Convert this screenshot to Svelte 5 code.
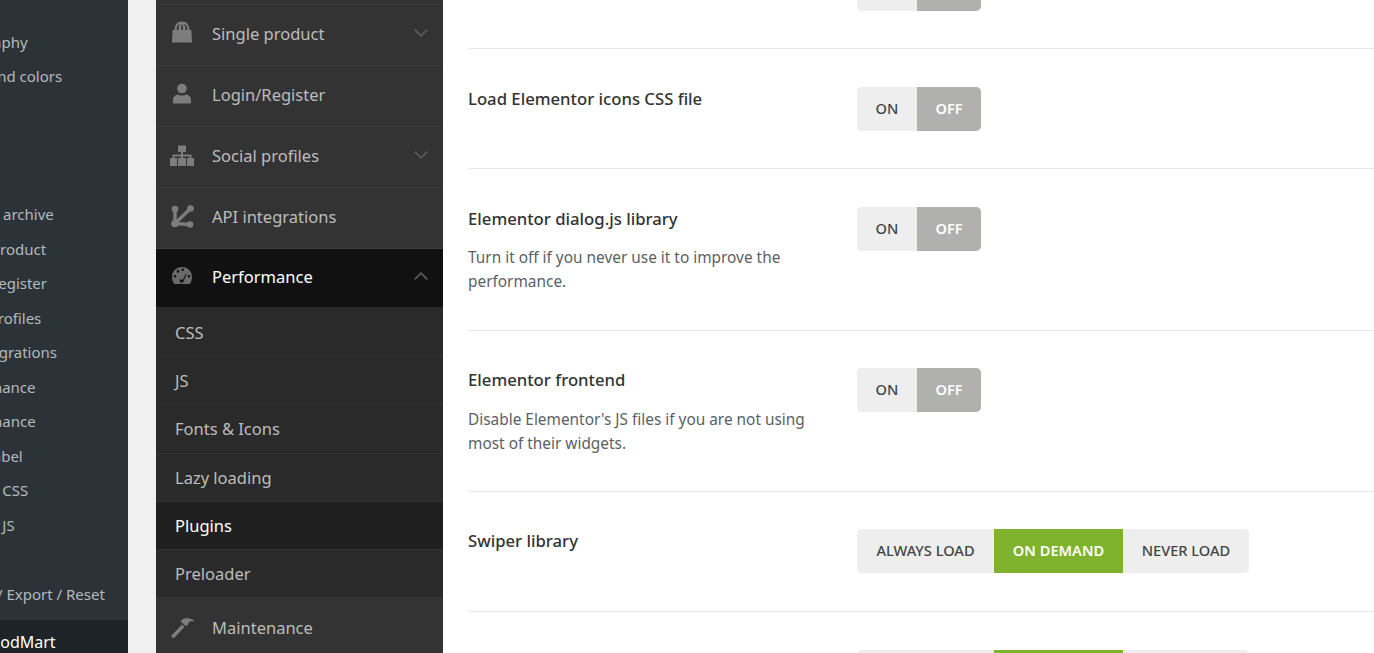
<script>
  const wpItems = [
    'General', 'Typography', 'Styles and colors', '', 'Blog', '',
    'Product archive', 'Single product', 'Login/Register', 'Social profiles',
    'API integrations', 'Performance', 'Maintenance', 'White label',
    'Custom CSS', 'Custom JS', '', 'Import / Export / Reset'
  ];
  const subs = ['CSS', 'JS', 'Fonts & Icons', 'Lazy loading', 'Plugins', 'Preloader'];
  const onOff = [{ t: 'ON' }, { t: 'OFF', off: true }];
  const tri = [{ t: 'ALWAYS LOAD' }, { t: 'ON DEMAND', on: true }, { t: 'NEVER LOAD' }];
  const rows = [
    { label: '', opts: onOff },
    { label: 'Load Elementor icons CSS file', opts: onOff },
    { label: 'Elementor dialog.js library', desc: 'Turn it off if you never use it to improve the performance.', opts: onOff },
    { label: 'Elementor frontend', desc: "Disable Elementor's JS files if you are not using most of their widgets.", opts: onOff },
    { label: 'Swiper library', opts: tri },
    { label: '', opts: tri }
  ];
</script>

{#snippet chev(up)}
  <svg class="chev" viewBox="0 0 14 8" width="14" height="8">
    <path d={up ? 'M.7 7.300 7 1.200l6.300 6.100' : 'M.7.7 7 6.800 13.300.7'} />
  </svg>
{/snippet}

<div class="page">
  <aside class="wp">
    <ul class="wp-list">
      {#each wpItems as item}
        <li>{item}</li>
      {/each}
    </ul>
    <div class="wp-current">WoodMart</div>
  </aside>

  <nav class="panel">
    <div class="top-spacer"></div>
    <div class="item">
      <svg class="ico" viewBox="0 0 24 24" width="24" height="24">
        <path fill-rule="evenodd" d="M2 21.500 2.600 9H4.500C4.600 3.500 7.500.5 12 .5s7.400 3 7.500 8.500h1.900L22 21.500ZM6.800 9h1.700V7.200C8.500 5.200 9.300 3.800 10.400 3.100 8.400 3.500 6.800 5 6.800 7.200ZM11.200 9h1.600V7c0-1.800-.3-3.200-.8-4-.5.800-.8 2.200-.8 4ZM15.500 9h1.700V7.200c0-2.200-1.600-3.700-3.600-4.100 1.100.7 1.900 2.100 1.900 4.100Z" />
      </svg>
      <span>Single product</span>{@render chev(false)}
    </div>
    <div class="item">
      <svg class="ico" viewBox="0 0 24 24" width="24" height="24">
        <circle cx="12" cy="6.500" r="4.800" /><path d="M4 21.500c-.6 0-1-.4-1-1v-2.500c0-3.300 2.300-5.400 5.200-5.600 1 .8 2.400 1.200 3.800 1.200s2.800-.4 3.800-1.200c2.900.2 5.200 2.300 5.200 5.600v2.500c0 .6-.4 1-1 1Z" />
      </svg>
      <span>Login/Register</span>
    </div>
    <div class="item">
      <svg class="ico" viewBox="0 0 24 24" width="24" height="24">
        <path d="M8 2.500h8V9h-3v2.500h8.500V15H24v8h-7v-8h2.500v-1.500H13V15h3v8H8v-8h3v-1.500H4.500V15H7v8H0v-8h2.500v-3.500H11V9H8Z" />
      </svg>
      <span>Social profiles</span>{@render chev(false)}
    </div>
    <div class="item">
      <svg class="ico" viewBox="0 0 24 24" width="24" height="24">
        <circle cx="5" cy="5" r="3.300" /><circle cx="20.500" cy="4.500" r="3.300" /><circle cx="5" cy="19.500" r="3.800" /><circle cx="20" cy="20.500" r="3.300" />
        <path class="line" d="M5 5v14.500L20.500 4.500M5 19.500l15 1" />
      </svg>
      <span>API integrations</span>
    </div>
    <div class="item active">
      <svg class="ico" viewBox="0 0 24 24" width="24" height="24">
        <path fill-rule="evenodd" d="M12 3C5.900 3 2 7.500 2 13c0 2.500.7 4.700 1.800 6.500.3.400.7.500 1.100.5h14.200c.4 0 .8-.1 1.100-.5C21.300 17.700 22 15.500 22 13c0-5.500-3.900-10-10-10ZM5 13.500a1.300 1.300 0 1 0 0-2.600 1.300 1.300 0 0 0 0 2.600ZM8 8.700a1.300 1.300 0 1 0 0-2.600 1.300 1.300 0 0 0 0 2.600ZM12.700 7a1.300 1.300 0 1 0 0-2.600 1.300 1.300 0 0 0 0 2.600ZM19 13.500a1.300 1.300 0 1 0 0-2.600 1.300 1.300 0 0 0 0 2.600ZM10.200 15.500a2 2 0 1 0 3.500 1.600l2.900-7-.9-.4-3 6.600a2 2 0 0 0-2.500-.8Z" />
      </svg>
      <span>Performance</span>{@render chev(true)}
    </div>
    <div class="subs">
      {#each subs as s}
        <div class="sub" class:current={s === 'Plugins'}>{s}</div>
      {/each}
    </div>
    <div class="item last">
      <svg class="ico" viewBox="0 0 24 24" width="24" height="24">
        <path d="M1.500 20.500 12 9.500 14.500 12 4 23C3 23.500 1 22 1.500 20.500ZM10.500 6.500C12.500 3.800 15.500 2.800 18.500 3.200L23.500 5 24 6.500C21.500 5.800 19.500 6.300 18.800 7.500L17.500 10.500 15 10.500 12 7.500Z" />
      </svg>
      <span>Maintenance</span>
    </div>
  </nav>

  <main class="content">
    {#each rows as row, i}
      <section class="row" class:first={i === 0}>
        <div class="text">
          <h3>{row.label}</h3>
          {#if row.desc}<p>{row.desc}</p>{/if}
        </div>
        <div class="opts" class:tri={row.opts === tri}>
          {#each row.opts as o}
            <button class:off={o.off} class:on={o.on}>{o.t}</button>
          {/each}
        </div>
      </section>
    {/each}
  </main>
</div>

<style>
  :global(body) { margin: 0; background: #fff; }
  .page {
    width: 1374px; height: 653px; overflow: hidden; display: flex;
    font-family: "Noto Sans", "Open Sans", sans-serif; background: #f0f0f1;
  }
  .wp {
    width: 128px; flex: none; height: 653px; background: #2c3338; overflow: hidden;
    display: flex; flex-direction: column; white-space: nowrap;
  }
  .wp-list {
    list-style: none; margin: -10px 0 0 -56px; padding: 0; color: #b4b9be; font-size: 15px;
  }
  .wp-list li { height: 34.500px; line-height: 34.500px; }
  .wp-current {
    margin-top: auto; height: 33px; line-height: 44px; background: #1d2327;
    color: #fff; font-size: 16px; text-indent: -24px; overflow: hidden;
  }

  .panel {
    width: 287px; flex: none; margin-left: 28px; background: #333; height: 653px; overflow: hidden;
    color: #bdbdbd; font-size: 16.500px;
  }
  .top-spacer { height: 4px; border-bottom: 1px solid #3c3c3c; }
  .item {
    height: 59.900px; border-bottom: 1px solid #3c3c3c; display: flex; align-items: center;
    padding: 0 15px 0 14px;
  }
  .item span { margin-left: 18px; flex: 1; padding-bottom: 2px; }
  .item.active { background: #111; color: #fff; height: 58.400px; border-bottom: 0; }
  .item.last { border-bottom: 0; padding-top: 1px; }
  .ico { fill: #7d7d7d; flex: none; margin-top: -3px; }
  .ico .line { fill: none; stroke: #7d7d7d; stroke-width: 3.400; }
  .item.active .ico { fill: #6a6a6a; }
  .chev { fill: none; stroke: #5a5a5a; stroke-width: 1.800; flex: none; margin-top: -3px; }
  .subs { background: #2a2a2a; padding-top: 2px; }
  .sub {
    height: 47.200px; line-height: 47.200px; padding-left: 19px; border-bottom: 1px solid #333;
  }
  .sub:last-child { border-bottom: 0; }
  .sub.current { background: #1f1f1f; color: #fff; }

  .content { flex: 1; background: #fff; padding-left: 25px; margin-top: -72px; height: 760px; }
  .row {
    display: flex; align-items: flex-start; padding: 38px 0 37px; border-top: 1px solid #e8e8e8;
  }
  .row.first { border-top: 0; padding-top: 39px; }
  .text { width: 389px; flex: none; }
  h3 { margin: 0; font-size: 16.700px; font-weight: 500; line-height: 24px; color: #333; min-height: 24px; }
  p { margin: 15px 0 -1px; font-size: 15.400px; line-height: 24px; color: #5a5f66; width: 345px; }
  .row:nth-child(4) h3, .row:nth-child(5) h3 { margin-top: -1px; }
  .row:nth-child(4) p { margin: 16px 0 -2px; }
  .row:nth-child(4) .opts, .row:nth-child(5) .opts { margin-top: -1px; }
  .row:nth-child(5) { padding-bottom: 38px; }
  .opts { display: flex; border-radius: 5px; overflow: hidden; background: #eee; }
  button {
    border: 0; height: 44px; padding: 0 0 2px; background: #eee; color: #444; width: 60px;
    font: 500 14.600px "Noto Sans", sans-serif; white-space: nowrap;
  }
  button.off { background: #b0b0ae; color: #fff; font-weight: 600; width: 64px; }
  button.on { background: #7fb32e; color: #fff; font-weight: 600; }
  .tri button:nth-child(1) { width: 137px; }
  .tri button:nth-child(2) { width: 129px; }
  .tri button:nth-child(3) { width: 126px; }
</style>
